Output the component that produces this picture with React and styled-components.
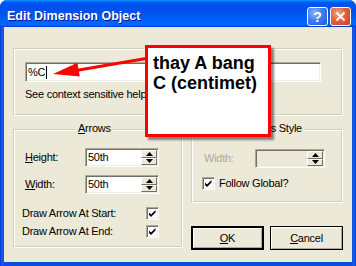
import React from 'react';
import styled, { createGlobalStyle } from 'styled-components';

const Global = createGlobalStyle`
  html, body { margin: 0; padding: 0; background: #ffffff; }
  body { width: 356px; height: 266px; overflow: hidden; }
`;

const Window = styled.div`
  position: relative;
  width: 356px;
  height: 266px;
  box-sizing: border-box;
  display: flex;
  flex-direction: column;
  background: linear-gradient(90deg, #0831D9 0, #1660E8 2px, #0B4CDE 4px, #0B4CDE 352px, #1660E8 354px, #0831D9 356px);
  border-radius: 7px 7px 0 0;
  overflow: hidden;
  font-family: "Liberation Sans", Arial, sans-serif;
  font-size: 11px;
  letter-spacing: -0.25px;
  color: #000;
`;

const TitleBar = styled.div`
  height: 27px;
  flex: none;
  box-sizing: border-box;
  display: flex;
  align-items: flex-start;
  padding: 7px 5px 0 7px;
  background: linear-gradient(180deg, #0997FF 0%, #0053EE 10%, #0050EE 40%, #0066FF 86%, #0066FF 92%, #005BFF 95%, #003DD7 97%, #003DD7 100%);
`;

const Title = styled.div`
  flex: 1;
  color: #fff;
  font-weight: bold;
  font-size: 12.5px;
  line-height: 19px;
  letter-spacing: 0;
  text-shadow: 1px 1px 0 #0F1089;
`;

const CaptionButton = styled.div`
  width: 21px;
  height: 19px;
  box-sizing: border-box;
  margin-left: ${p => (p.$gap ? '2px' : '0')};
  border: 1px solid #fff;
  border-radius: 3px;
  display: flex;
  align-items: center;
  justify-content: center;
  color: #fff;
  font-weight: bold;
  font-size: 14px;
  letter-spacing: 0;
  background: ${p =>
    p.$close
      ? 'radial-gradient(circle at 35% 30%, #F1A587 0%, #E2623B 45%, #C9401B 100%)'
      : 'radial-gradient(circle at 35% 30%, #8FB6FA 0%, #3F7EEF 45%, #1F55D8 100%)'};
`;

const Client = styled.div`
  flex: 1;
  margin: 0 4px 4px 4px;
  background: #ECE9D8;
  box-sizing: border-box;
  padding: 21px 9px 0 9px;
  display: flex;
  flex-direction: column;
`;

const GroupBox = styled.div`
  position: relative;
  box-sizing: border-box;
  width: ${p => p.$w || 'auto'};
  height: ${p => p.$h};
  border: 1px solid;
  border-color: #D0D0BF #fff #fff #D0D0BF;
  box-shadow: inset 1px 1px 0 #fff, inset -1px -1px 0 #D0D0BF;
  padding: ${p => p.$pad};
  display: flex;
  flex-direction: column;
`;

const Legend = styled.span`
  position: absolute;
  top: -8px;
  ${p => (p.$right != null ? `right: ${p.$right}px;` : `left: ${p.$left}px;`)}
  padding: 0 2px;
  line-height: 13px;
  background: #ECE9D8;
  color: #000;
`;

const TextField = styled.div`
  box-sizing: border-box;
  height: ${p => p.$h || 19}px;
  width: ${p => (p.$w ? `${p.$w}px` : 'auto')};
  background: ${p => (p.$disabled ? '#ECE9D8' : '#fff')};
  border: 1px solid;
  border-color: #ACA899 #fff #fff #ACA899;
  box-shadow: inset 1px 1px 0 #716F64, inset -1px -1px 0 #F1EFE2;
  display: flex;
  align-items: center;
  padding: 1px 1px 1px 2px;
  line-height: 13px;
`;

const Caret = styled.span`
  display: inline-block;
  width: 1px;
  height: 13px;
  background: #000;
  margin-left: 1px;
`;

const HelpText = styled.div`
  margin-top: 6px;
  line-height: 13px;
`;

const BottomRow = styled.div`
  margin-top: 13px;
  display: flex;
  gap: 8px;
`;

const Column = styled.div`
  display: flex;
  flex-direction: column;
  width: ${p => p.$w}px;
`;

const FieldRow = styled.div`
  display: flex;
  align-items: center;
  height: 19px;
  margin-top: ${p => p.$mt || 0}px;
  padding-left: ${p => p.$pl}px;
`;

const Label = styled.span`
  width: ${p => (p.$w ? `${p.$w}px` : 'auto')};
  flex: none;
  color: ${p => (p.$disabled ? '#ACA899' : '#000')};
  line-height: 13px;
  white-space: nowrap;
  margin-left: ${p => p.$ml || 0}px;
`;

const Value = styled.span`
  flex: 1;
`;

const SpinBox = styled.div`
  display: flex;
  flex-direction: column;
  width: 16px;
  align-self: stretch;
`;

const SpinButton = styled.div`
  flex: 1;
  box-sizing: border-box;
  background: #ECE9D8;
  border: 1px solid;
  border-color: #fff #716F64 #716F64 #fff;
  display: flex;
  align-items: center;
  justify-content: center;
`;

const CheckRow = styled.div`
  display: flex;
  align-items: center;
  height: 13px;
  margin-top: ${p => p.$mt || 0}px;
  padding-left: ${p => p.$pl}px;
`;

const Box = styled.div`
  width: 13px;
  height: 13px;
  box-sizing: border-box;
  flex: none;
  background: #fff;
  border: 1px solid;
  border-color: #ACA899 #fff #fff #ACA899;
  box-shadow: inset 1px 1px 0 #716F64, inset -1px -1px 0 #F1EFE2;
  display: flex;
  align-items: center;
  justify-content: center;
`;

const ButtonRow = styled.div`
  display: flex;
  gap: 6px;
  margin-top: 23px;
`;

const PushButton = styled.div`
  width: 73px;
  height: 24px;
  box-sizing: border-box;
  background: #ECE9D8;
  border: ${p => (p.$default ? 2 : 1)}px solid #000;
  box-shadow: inset 1px 1px 0 #fff, inset -1px -1px 0 #ACA899;
  display: flex;
  align-items: center;
  justify-content: center;
  line-height: 13px;
`;

const Callout = styled.div`
  position: absolute;
  left: 145px;
  top: 45px;
  width: 126px;
  height: 92px;
  box-sizing: border-box;
  border: 3px solid #FF0000;
  background: #fff;
  box-shadow: 3px 3px 2px rgba(0, 0, 0, 0.45);
  padding: 5px 0 0 5px;
  font-family: "Liberation Sans", Arial, sans-serif;
  font-weight: bold;
  font-size: 18px;
  line-height: 20px;
  letter-spacing: 0;
  color: #000;
  white-space: nowrap;
`;

const Overlay = styled.svg`
  position: absolute;
  left: 0;
  top: 0;
  pointer-events: none;
`;

const Tri = ({ up }) => (
  <svg width="7" height="4" viewBox="0 0 7 4">
    <polygon points={up ? '3.5,0 7,4 0,4' : '0,0 7,0 3.5,4'} fill="#000" />
  </svg>
);

const Spinner = () => (
  <SpinBox>
    <SpinButton><Tri up /></SpinButton>
    <SpinButton><Tri /></SpinButton>
  </SpinBox>
);

const Check = () => (
  <svg width="9" height="9" viewBox="0 0 9 9">
    <polygon points="1,3.5 3,5.5 7.5,1 7.5,3.5 3,8 1,6" fill="#000" />
  </svg>
);

export default function App() {
  return (
    <>
      <Global />
      <Window>
        <TitleBar>
          <Title>Edit Dimension Object</Title>
          <CaptionButton>?</CaptionButton>
          <CaptionButton $close $gap>
            <svg width="11" height="11" viewBox="0 0 11 11">
              <path d="M1.5 1.5 L9.5 9.5 M9.5 1.5 L1.5 9.5" stroke="#fff" strokeWidth="2" />
            </svg>
          </CaptionButton>
        </TitleBar>
        <Client>
          <GroupBox $h="68px" $pad="13px 21px 0 11px">
            <TextField $h={20}>
              %C<Caret />
            </TextField>
            <HelpText>See context sensitive help</HelpText>
          </GroupBox>
          <BottomRow>
            <GroupBox $w="170px" $h="119px" $pad="18px 0 0 0">
              <Legend $left={62}><u>A</u>rrows</Legend>
              <FieldRow $pl={11}>
                <Label $w={60}><u>H</u>eight:</Label>
                <TextField $w={74}>
                  <Value>50th</Value>
                  <Spinner />
                </TextField>
              </FieldRow>
              <FieldRow $pl={11} $mt={8}>
                <Label $w={60}><u>W</u>idth:</Label>
                <TextField $w={74}>
                  <Value>50th</Value>
                  <Spinner />
                </TextField>
              </FieldRow>
              <CheckRow $pl={8} $mt={13}>
                <Label $w={124}>Draw Arrow At Start:</Label>
                <Box><Check /></Box>
              </CheckRow>
              <CheckRow $pl={8} $mt={5}>
                <Label $w={124}>Draw Arrow At End:</Label>
                <Box><Check /></Box>
              </CheckRow>
            </GroupBox>
            <Column $w={152}>
              <GroupBox $h="74px" $pad="19px 0 0 0">
                <Legend $right={38}>Extensions Style</Legend>
                <FieldRow $pl={12}>
                  <Label $w={51} $disabled>Width:</Label>
                  <TextField $w={70} $disabled>
                    <Value />
                    <Spinner />
                  </TextField>
                </FieldRow>
                <CheckRow $pl={10} $mt={9}>
                  <Box><Check /></Box>
                  <Label $ml={4}>Follow Global?</Label>
                </CheckRow>
              </GroupBox>
              <ButtonRow>
                <PushButton $default><span><u>O</u>K</span></PushButton>
                <PushButton><span><u>C</u>ancel</span></PushButton>
              </ButtonRow>
            </Column>
          </BottomRow>
        </Client>
        <Callout>
          thay A bang
          <br />
          C (centimet)
        </Callout>
        <Overlay width="356" height="266" viewBox="0 0 356 266">
          <line x1="146" y1="58.5" x2="76" y2="70.5" stroke="#FF0000" strokeWidth="3" />
          <polygon points="53,74 77.4,62.7 79.8,76.5" fill="#FF0000" />
        </Overlay>
      </Window>
    </>
  );
}
